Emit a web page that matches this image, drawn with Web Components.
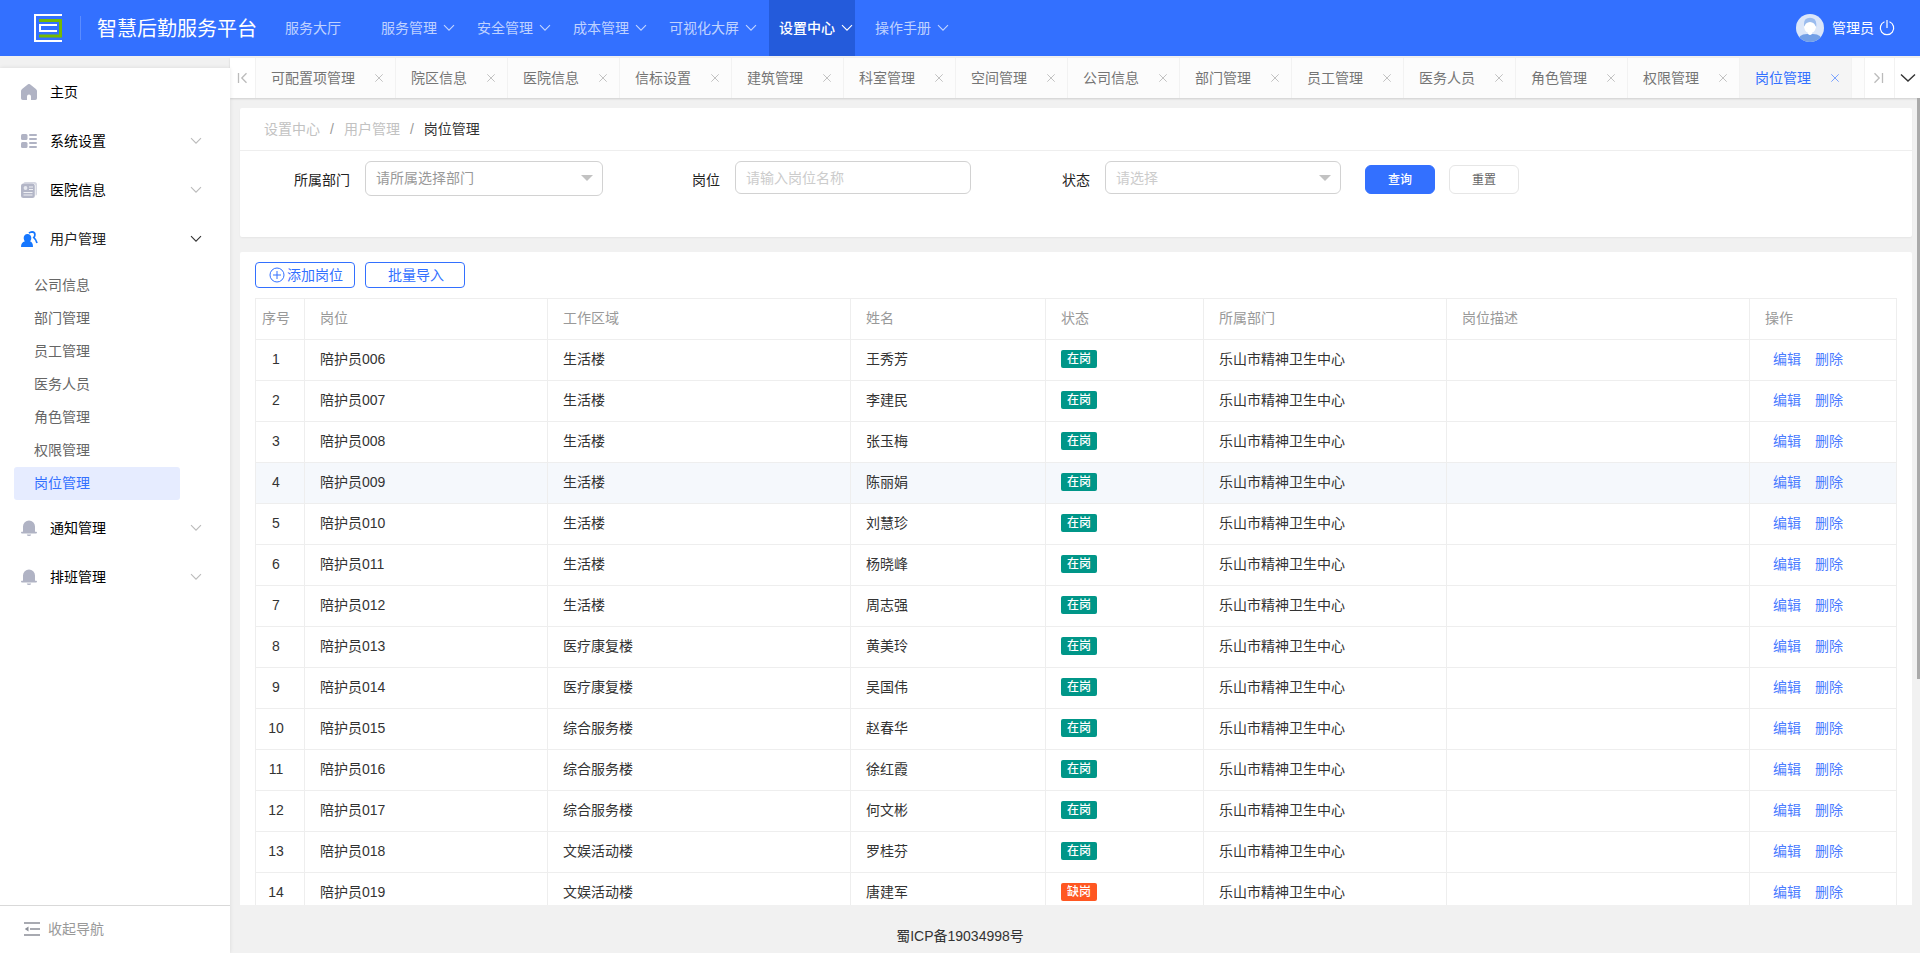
<!DOCTYPE html>
<html lang="zh-CN">
<head>
<meta charset="utf-8">
<title>智慧后勤服务平台</title>
<style>
  :root {
    --brand: #3370ff;
    --brand-dark: #245bdb;
    --line: #eeeeee;
    --page: #f1f1f1;
    --side: 230px;
  }
  body {
    margin: 0;
    color: #333;
    font: 14px/24px "Liberation Sans", "Noto Sans CJK SC", sans-serif;
  }
</style>
</head>
<body>
<admin-app></admin-app>

<script>
const icons = {
  down: '<svg width="12" height="8" viewBox="0 0 12 8" fill="none" stroke="currentColor" stroke-width="1.1"><path d="M1 1.2l5 5 5-5"/></svg>',
  wide: '<svg width="16" height="10" viewBox="0 0 16 10" fill="none" stroke="currentColor" stroke-width="1.4"><path d="M1 1.5l7 6.6 7-6.6"/></svg>',
  close: '<svg width="8" height="8" viewBox="0 0 8 8" fill="none" stroke="currentColor" stroke-width="1"><path d="M.3.3l7.4 7.4M7.7.3L.3 7.7"/></svg>',
  first: '<svg width="11" height="12" viewBox="0 0 11 12" fill="none" stroke="currentColor" stroke-width="1.3"><path d="M1.5 1v10M9.5 1.2L4.8 6l4.7 4.8"/></svg>',
  last: '<svg width="11" height="12" viewBox="0 0 11 12" fill="none" stroke="currentColor" stroke-width="1.3"><path d="M9.5 1v10M1.5 1.2L6.2 6l-4.7 4.8"/></svg>',
  home: '<svg width="16" height="16" viewBox="0 0 16 16" fill="#b0b3c4"><path d="M6.7.5a2 2 0 0 1 2.6 0l5.6 4.400q1.100.9 1.100 2.200v7.100Q16 16 14.200 16H10v-3.600a2 2 0 0 0-4 0V16H1.800Q0 16 0 14.200V7.100Q0 5.800 1.100 4.900z"/></svg>',
  grid: '<svg width="16" height="14" viewBox="0 0 16 14" fill="#b0b3c4"><rect width="6.500" height="6" rx="1.500"/><rect y="8" width="6.500" height="6" rx="1.500"/><path d="M9 0h6a1 1 0 0 1 0 2H9a1 1 0 0 1 0-2zM9 4h6a1 1 0 0 1 0 2H9a1 1 0 0 1 0-2zM9 8h6a1 1 0 0 1 0 2H9a1 1 0 0 1 0-2zM9 12h6a1 1 0 0 1 0 2H9a1 1 0 0 1 0-2z"/></svg>',
  news: '<svg width="16" height="16" viewBox="0 0 16 16"><path d="M4 0h9.500Q16 0 16 2.500V12q0 1.500-1.500 1.500V4Q14.500 1.500 12 1.500H2.500Q2.500 0 4 0z" fill="#d5d7e1"/><rect y="1.500" width="13.800" height="14.500" rx="2.500" fill="#b3b6c7"/><path d="M8 5h4M8 7.500h4M2.500 10.500h9M2.500 13h9" stroke="#eff0f4" fill="none"/><circle cx="4.500" cy="6" r="1.900" fill="#e6e8ef"/></svg>',
  users: '<svg width="17" height="16" viewBox="0 0 17 16"><path d="M6.500 3C9 3 10.300 5 10.300 7c0 1.500-.6 2.500-1.200 3.300q2.900 1 2.900 5.700H0q0-4.700 3.900-5.700C3.300 9.500 2.700 8.500 2.700 7 2.700 5 4 3 6.500 3z" fill="#1677ff"/><path d="M8 2.200Q9.300.9 11 .9q2.900.1 2.900 2.800 0 1.500-1.100 2.900 2.300 1.700 3.200 5.400" fill="none" stroke="#1677ff" stroke-width="1.700"/></svg>',
  bell: '<svg width="16" height="16" viewBox="0 0 16 16" fill="#b0b3c4"><path d="M2 11.800V6.500a6 6 0 0 1 12 0v5.300h1.300q.7.100.7.800t-.7.800H.700q-.7 0-.7-.8t.7-.8zM5.800 14.500h4.400q-.2 1.500-2.200 1.500t-2.200-1.500z"/></svg>',
  fold: '<svg width="16" height="14" viewBox="0 0 16 14" stroke="#8c8f98" stroke-width="1.500" fill="none"><path d="M0 1h16M6 7h10M0 13h16"/><path d="M4.500 4.500v5L.8 7z" fill="#8c8f98" stroke="none"/></svg>',
  plus: '<svg width="16" height="16" viewBox="0 0 16 16" fill="none" stroke="currentColor"><circle cx="8" cy="8" r="7"/><path d="M8 4v8M4 8h8"/></svg>',
  power: '<svg width="16" height="16" viewBox="0 0 16 16" fill="none" stroke="#fff" stroke-width="1.200"><path d="M5.500 1.800a6.700 6.700 0 1 0 5 0M8 0v8"/></svg>',
  avatar: '<svg width="28" height="28" viewBox="0 0 28 28"><defs><clipPath id="c"><circle cx="14" cy="14" r="14"/></clipPath></defs><g clip-path="url(#c)"><path fill="#dbe6f9" d="M0 0h28v28H0z"/><path d="M8 13V10q0-6.200 6-6.200t6.300 6.200V13z" fill="#9bbcee"/><path d="M2 28q0-8 9-8h6q9 0 9 8z" fill="#729fe6"/><circle cx="14" cy="13.500" r="5.600" fill="#fff"/><path d="M7.800 12.200h12.600L19 15.200H9zM12 18h4v2q-2 2-4 0z" fill="#fff"/></g></svg>',
  logo: '<svg width="28" height="28" viewBox="0 0 28 28" fill="none"><path d="M28 1H1v26h27" stroke="#fff" stroke-width="2"/><path d="M5 6.500h21.500V22H5" stroke="#76b900" stroke-width="3"/><path d="M23 11H6v6h17" stroke="#fff" stroke-width="2"/></svg>'
};

class Base extends HTMLElement {
  connectedCallback() {
    if (this.shadowRoot) return;
    this.attachShadow({ mode: 'open' }).innerHTML =
      `<style>*{box-sizing:border-box}:host{display:block;box-sizing:border-box}
       a{color:inherit;text-decoration:none}svg{display:block;flex:none}
       button,input,select{font:inherit;margin:0}
       button{cursor:pointer;color:inherit}${this.css()}</style>${this.html()}`;
  }
  css() { return ''; }
  html() { return '<slot></slot>'; }
}
const define = (name, css, html) => customElements.define(name, class extends Base {
  css() { return css; }
  html() { return html.call(this); }
});

define('nav-item', `
  :host{height:56px}
  a{display:flex;align-items:center;gap:6px;width:100%;height:100%;padding:0 2px 0 10px;
    color:rgba(255,255,255,.7);white-space:nowrap}
  :host(:not([arrow])) a{padding-right:20px}
  :host([active]) a{color:#fff;background:var(--brand-dark);font-weight:500}`,
  function () { return `<a href="#"><slot></slot>${this.hasAttribute('arrow') ? icons.down : ''}</a>`; });

define('app-header', `
  :host{display:flex;align-items:center;height:56px;background:var(--brand);color:#fff}
  .logo{margin-left:34px}
  .rule{width:1px;height:24px;margin:0 16px 0 18px;background:rgba(255,255,255,.2)}
  h1{margin:0;font-size:20px;font-weight:400;white-space:nowrap;padding-top:2px}
  nav{display:flex;gap:10px;margin-left:18px}
  .user{display:flex;align-items:center;margin-left:auto;padding-right:25px;white-space:nowrap}
  .user a{padding:0 5px 0 8px}`,
  function () { return `
  <span class="logo">${icons.logo}</span><span class="rule"></span><h1>智慧后勤服务平台</h1>
  <nav><nav-item>服务大厅</nav-item><nav-item arrow>服务管理</nav-item><nav-item arrow>安全管理</nav-item>
  <nav-item arrow>成本管理</nav-item><nav-item arrow>可视化大屏</nav-item><nav-item arrow active>设置中心</nav-item>
  <nav-item arrow>操作手册</nav-item></nav>
  <div class="user">${icons.avatar}<a href="#">管理员</a>${icons.power}</div>`; });

define('side-item', `
  a{display:flex;align-items:center;height:49px;padding:0 28px 2px 20px;color:#000}
  .ic{display:flex;width:30px;padding-left:1px}
  .ar{margin-left:auto;color:#bbb}
  :host([open]) a{color:#222}
  :host([open]) .ar{color:#333}
  .sub{padding:5px 0 4px}
  .sub:not(.on){display:none}`,
  function () { return `
  <a href="#"><span class="ic">${icons[this.getAttribute('icon')]}</span>${this.getAttribute('label')}
  ${this.hasAttribute('arrow') ? `<span class="ar">${icons.down}</span>` : ''}</a>
  <div class="sub ${this.hasAttribute('open') ? 'on' : ''}"><slot></slot></div>`; });

define('side-link', `
  a{display:block;height:33px;line-height:32px;margin:0 50px 0 14px;padding-left:20px;border-radius:3px;color:#666}
  :host([active]) a{background:#e6ecff;color:var(--brand)}`,
  function () { return `<a href="#"><slot></slot></a>`; });

define('side-nav', `
  :host{display:flex;flex-direction:column;min-height:0;background:#fff;margin-top:12px;box-shadow:0 0 4px rgba(0,0,0,.1)}
  nav{flex:1;min-height:0;overflow:hidden}
  button{display:flex;align-items:center;gap:8px;height:48px;padding:0 24px 2px;border:0;border-top:1px solid #d9d9d9;
    background:#fff;color:#999}`,
  function () { return `<nav>
  <side-item icon="home" label="主页"></side-item>
  <side-item icon="grid" label="系统设置" arrow></side-item>
  <side-item icon="news" label="医院信息" arrow></side-item>
  <side-item icon="users" label="用户管理" arrow open>
    <side-link>公司信息</side-link><side-link>部门管理</side-link><side-link>员工管理</side-link>
    <side-link>医务人员</side-link><side-link>角色管理</side-link><side-link>权限管理</side-link>
    <side-link active>岗位管理</side-link>
  </side-item>
  <side-item icon="bell" label="通知管理" arrow></side-item>
  <side-item icon="bell" label="排班管理" arrow></side-item>
  </nav><button type="button">${icons.fold}收起导航</button>`; });

define('tab-item', `
  :host{display:flex;align-items:center;flex:none;height:40px;padding:0 12px 0 15px;border-right:1px solid #f2f2f2;
    color:#757575;white-space:nowrap}
  button{display:flex;margin-left:20px;padding:0;border:0;background:none;color:#c2c2c2}
  :host([active]){background:#f5f5f5;color:var(--brand)}
  :host([active]) button{color:#7aa2ff}`,
  function () { return `<a href="#"><slot></slot></a><button type="button" aria-label="关闭">${icons.close}</button>`; });

define('tab-strip', `
  :host{display:flex;height:40px;background:#fff;box-shadow:0 1px 2px rgba(0,0,0,.15);position:relative}
  .tabs{display:flex;flex:1;min-width:0;overflow:hidden;background:#fcfcfc}
  .b{display:flex;align-items:center;justify-content:center;flex:none;width:26px;padding:0;border:0;background:#fff;color:#bbb}
  .b.l{border-right:1px solid #f2f2f2}
  .b.n{width:31px;padding-right:3px;border:solid #f2f2f2;border-width:0 1px}
  .b.m{width:25px;color:#333}`,
  function () {
    const names = ['可配置项管理','院区信息','医院信息','信标设置','建筑管理','科室管理','空间管理','公司信息','部门管理','员工管理','医务人员','角色管理','权限管理'];
    return `<button class="b l" type="button" aria-label="向左">${icons.first}</button>
    <div class="tabs">${names.map(n => `<tab-item>${n}</tab-item>`).join('')}<tab-item active>岗位管理</tab-item></div>
    <button class="b n" type="button" aria-label="向右">${icons.last}</button>
    <button class="b m" type="button" aria-label="更多">${icons.wide}</button>`; });

define('form-field', `
  :host{display:flex;align-items:flex-start;gap:15px;padding-right:9px}
  :host([tall]){padding-right:7px}
  label{flex:none;width:110px;line-height:38px;text-align:right;color:#222}
  .box{position:relative;flex:1;min-width:0}
  input,select{display:block;width:100%;height:33px;padding:0 10px;border:1px solid #d2d2d2;border-radius:6px;
    background:#fff;color:#ccc;appearance:none;outline:0}
  input::placeholder{color:#ccc}
  :host([tall]) select{height:35px;padding-bottom:2px;color:#999}
  i{position:absolute;right:10px;top:14px;border:6px solid transparent;border-top-color:#c2c2c2;border-bottom:0;pointer-events:none}`,
  function () {
    const hint = this.getAttribute('hint');
    return `<label for="f">${this.getAttribute('label')}</label><div class="box">` +
      (this.getAttribute('kind') === 'select'
        ? `<select id="f"><option>${hint}</option></select><i></i>`
        : `<input id="f" type="text" placeholder="${hint}">`) + '</div>'; });

define('filter-panel', `
  :host{background:#fff;border-radius:2px;box-shadow:0 1px 2px rgba(0,0,0,.05)}
  nav{display:flex;gap:10px;height:43px;padding:0 24px;border-bottom:1px solid var(--line);line-height:42px;color:#999}
  nav a{color:#c2c2c2}
  nav b{font-weight:400;color:#333}
  form{display:grid;grid-template-columns:370fr 370fr 370fr 562fr;padding:10px 0 38px}
  .act{display:flex;gap:14px;padding:4px 0 5px 15px}
  .act button{width:70px;height:29px;padding:0;border:1px solid #e6e6e6;border-radius:6px;background:#fff;color:#666;font-size:12px}
  .act .go{background:var(--brand);border-color:var(--brand);color:#fff;font-weight:500}`,
  function () { return `
  <nav><a href="#">设置中心</a><span>/</span><a href="#">用户管理</a><span>/</span><b>岗位管理</b></nav>
  <form><form-field tall kind="select" label="所属部门" hint="请所属选择部门"></form-field>
  <form-field label="岗位" hint="请输入岗位名称"></form-field>
  <form-field kind="select" label="状态" hint="请选择"></form-field>
  <div class="act"><button class="go" type="button">查询</button><button type="button">重置</button></div></form>`; });

define('status-tag', `
  :host{display:block;width:max-content;height:18px;padding:0 6px;border-radius:2px;background:#009688;color:#fff;
    font-size:12px;line-height:18px;font-weight:500}
  :host([off]){background:#ff5722}`,
  function () { return '<slot></slot>'; });

define('post-table', `
  table{width:100%;table-layout:fixed;border-collapse:collapse}
  th,td{height:41px;padding:0 15px 2px;border:1px solid var(--line);font-weight:400;text-align:left;line-height:24px;white-space:nowrap}
  th{color:#999}
  th:first-child,td:first-child{padding:0 8px 2px 0;text-align:center}
  .hot{background:#f5f8fc}
  .ops a{color:#4a7bff;margin-left:14px}
  .ops a:first-child{margin-left:8px}`,
  function () {
    const areas = ['生活楼','生活楼','生活楼','生活楼','生活楼','生活楼','生活楼','医疗康复楼','医疗康复楼','综合服务楼','综合服务楼','综合服务楼','文娱活动楼','文娱活动楼'];
    const names = ['王秀芳','李建民','张玉梅','陈丽娟','刘慧珍','杨晓峰','周志强','黄美玲','吴国伟','赵春华','徐红霞','何文彬','罗桂芬','唐建军'];
    const rows = names.map((n, i) => `<tr${i === 3 ? ' class="hot"' : ''}><td>${i + 1}</td>
      <td>陪护员${String(i + 6).padStart(3, '0')}</td><td>${areas[i]}</td><td>${n}</td>
      <td>${i === 13 ? '<status-tag off>缺岗</status-tag>' : '<status-tag>在岗</status-tag>'}</td>
      <td>乐山市精神卫生中心</td><td></td>
      <td class="ops"><a href="#">编辑</a><a href="#">删除</a></td></tr>`).join('');
    const cols = [49, 243, 303, 195, 158, 243, 303, 147];
    return `<table><colgroup>${cols.map(c => `<col style="width:calc(100% * ${c} / 1641)">`).join('')}</colgroup>
    <thead><tr>${['序号','岗位','工作区域','姓名','状态','所属部门','岗位描述','操作'].map(h => `<th>${h}</th>`).join('')}</tr></thead>
    <tbody>${rows}</tbody></table>`; });

define('list-panel', `
  :host{background:#fff;border-radius:2px;padding:10px 15px}
  .bar{display:flex;gap:10px;margin-bottom:10px}
  .bar button{display:flex;align-items:center;justify-content:center;gap:2px;width:100px;height:26px;padding:0 0 0 2px;
    border:1px solid var(--brand);border-radius:4px;background:#fff;color:var(--brand)}`,
  function () { return `<div class="bar"><button type="button">${icons.plus}添加岗位</button>
  <button type="button">批量导入</button></div><post-table></post-table>`; });

define('admin-app', `
  :host{display:grid;grid-template:56px minmax(0,1fr) 48px / var(--side) minmax(0,1fr);height:100vh;background:var(--page)}
  app-header{grid-area:1/1/2/3}
  side-nav{grid-area:2/1/4/2;z-index:1}
  main{grid-area:2/2/3/3;display:flex;flex-direction:column;min-height:0;padding-top:2px}
  tab-strip{flex:none}
  .view{position:relative;flex:1;min-height:0}
  .scroll{display:flex;flex-direction:column;gap:15px;height:100%;padding:10px 8px 0 10px;overflow-y:auto;scrollbar-width:none}
  .scroll>*{flex:none}
  .thumb{position:absolute;top:0;right:0;width:3px;height:72%;background:#aaa}
  footer{grid-area:3/1/4/3;padding-top:6px;line-height:50px;text-align:center}`,
  function () { return `<app-header></app-header><side-nav></side-nav>
  <main><tab-strip></tab-strip><div class="view"><div class="scroll"><filter-panel></filter-panel><list-panel></list-panel></div>
  <div class="thumb"></div></div></main>
  <footer>蜀ICP备19034998号</footer>`; });
</script>
</body>
</html>
